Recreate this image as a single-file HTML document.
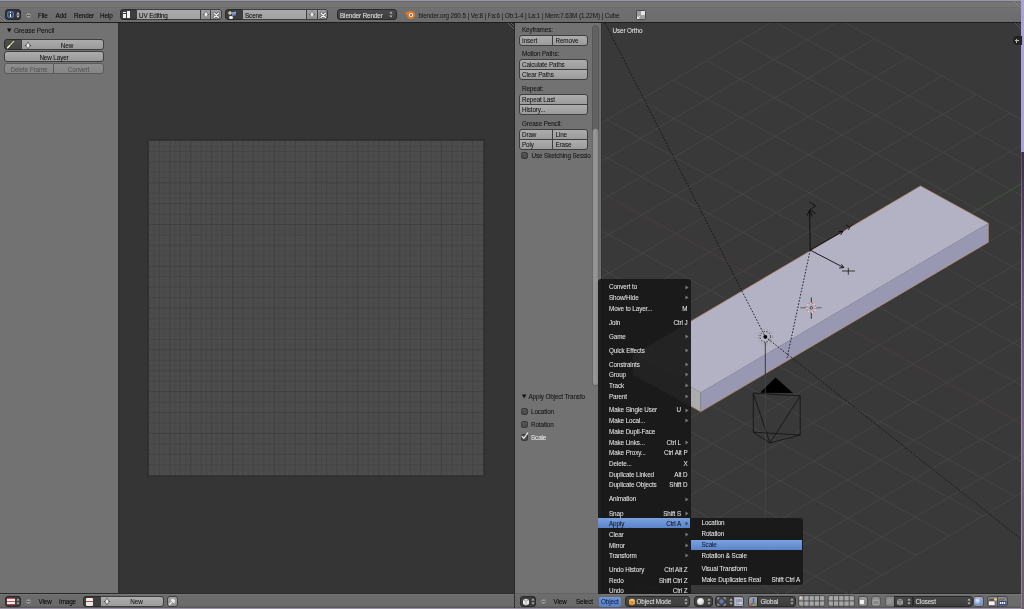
<!DOCTYPE html>
<html><head><meta charset="utf-8"><style>
*{margin:0;padding:0;box-sizing:border-box}
html,body{width:1024px;height:609px;overflow:hidden}
body{will-change:transform;position:relative;background:#727272;font-family:"Liberation Sans",sans-serif;font-size:6px;color:#000}
.a{position:absolute}
.t{position:absolute;white-space:nowrap;line-height:9.7px;height:9.7px;font-size:6.3px;letter-spacing:-0.1px;-webkit-text-stroke:0.04px currentColor}
.w{color:#e6e6e6}
.btn{position:absolute;border:1px solid #3e3e3e;border-radius:2px;background:linear-gradient(#a9a9a9,#969696)}
.dk{position:absolute;border:1px solid #2a2a2a;border-radius:2px;background:linear-gradient(#4c4c4c,#3c3c3c)}
.c{text-align:center}
</style></head><body>
<!-- top strip -->
<div class="a" style="left:0;top:0;width:1024px;height:1px;background:#9a97aa"></div>
<!-- top header -->
<div class="a" id="hdr" style="left:0;top:1px;width:1021px;height:22px;background:linear-gradient(#67676c 0,#67676c 1px,#757575 1px,#767675 6px,#6c6c6c 6px,#6c6c6c 7px,#717171 7px,#6e6e6e 14px,#6c6c6c 21px);border-bottom:1px solid #1e1e1e"></div>
<!-- info editor button -->
<div class="dk" style="left:5px;top:9px;width:16px;height:11px;border-radius:3px;background:#30333a;border-color:#26282c"></div>
<div class="a" style="left:7px;top:11.3px;width:7px;height:7px;border-radius:50%;background:radial-gradient(circle at 50% 50%,#26406a 0,#3a5a88 55%,#a8b8d0 80%,#6a7a90 100%)"></div>
<div class="a" style="left:10px;top:12.3px;width:1px;height:1px;background:#fff"></div>
<div class="a" style="left:10px;top:14px;width:1px;height:3.3px;background:#fff"></div>
<svg class="a" style="left:16px;top:10.5px" width="4" height="8"><path d="M0.3 3.4L2 1L3.7 3.4ZM0.3 4.6L2 7L3.7 4.6Z" fill="#c4c4c4"/></svg>
<div class="a" style="left:25.5px;top:12.5px;width:5px;height:5px;border-radius:50%;border:0.5px solid #8a8a8a;background:#a8a8a8"></div>
<div class="a" style="left:26.5px;top:14.5px;width:3px;height:1px;background:#555"></div>
<div class="t" style="left:38px;top:11px">File</div>
<div class="t" style="left:55.5px;top:11px">Add</div>
<div class="t" style="left:74px;top:11px">Render</div>
<div class="t" style="left:100px;top:11px">Help</div>

<!-- screen layout -->
<div class="dk" style="left:120px;top:9px;width:17px;height:11px;border-radius:3px 0 0 3px;background:#3d3d3d"></div>
<div class="a" style="left:123px;top:12px;width:3px;height:6px;background:#f0f0f0"></div>
<div class="a" style="left:127px;top:11px;width:3px;height:7px;background:#f0f0f0"></div>
<div class="a" style="left:123px;top:13px;width:3px;height:1px;background:#3d3d3d"></div>
<div class="btn" style="left:136px;top:9px;width:65px;height:11px;border-radius:0;background:linear-gradient(#aaaaaa,#a2a2a2)"></div>
<div class="t" style="left:139px;top:11px">UV Editing</div>
<div class="btn" style="left:200px;top:9px;width:11px;height:11px;border-radius:0;background:linear-gradient(#a4a4a4,#8e8e8e)"></div>
<svg class="a" style="left:201.5px;top:10px" width="8" height="9"><path d="M4 0.8L5.8 4.5L4 8.2L2.2 4.5Z" fill="#f2f2f2" stroke="#5a5a5a" stroke-width="0.6"/><path d="M0.8 4.5H2M6 4.5H7.2" stroke="#5a5a5a" stroke-width="0.9"/></svg>
<div class="btn" style="left:210px;top:9px;width:12px;height:11px;border-radius:0 3px 3px 0;background:linear-gradient(#a4a4a4,#8e8e8e)"></div>
<svg class="a" style="left:212px;top:10.5px" width="9" height="9"><path d="M2 2L6.5 6.5M6.5 2L2 6.5" stroke="#4a4a4a" stroke-width="2.6" stroke-linecap="round"/><path d="M2 2L6.5 6.5M6.5 2L2 6.5" stroke="#f4f4f4" stroke-width="1.4" stroke-linecap="round"/></svg>

<!-- scene -->
<div class="dk" style="left:225px;top:9px;width:18px;height:11px;border-radius:3px 0 0 3px;background:#3d3d3d"></div>
<div class="a" style="left:228px;top:11px;width:3.5px;height:3.5px;background:radial-gradient(#f0f0c0,#a0a070 60%,transparent 70%);border-radius:50%"></div>
<div class="a" style="left:232px;top:12px;width:3.5px;height:4px;background:linear-gradient(#a8b8e8,#4a60a8);transform:skewY(-15deg)"></div>
<div class="a" style="left:229px;top:15.5px;width:3.5px;height:3.5px;background:#f0f0f0;border-radius:50%"></div>
<div class="btn" style="left:242px;top:9px;width:65px;height:11px;border-radius:0;background:linear-gradient(#aaaaaa,#a2a2a2)"></div>
<div class="t" style="left:245px;top:11px">Scene</div>
<div class="btn" style="left:306px;top:9px;width:12px;height:11px;border-radius:0;background:linear-gradient(#a4a4a4,#8e8e8e)"></div>
<svg class="a" style="left:307.5px;top:10px" width="8" height="9"><path d="M4 0.8L5.8 4.5L4 8.2L2.2 4.5Z" fill="#f2f2f2" stroke="#5a5a5a" stroke-width="0.6"/><path d="M0.8 4.5H2M6 4.5H7.2" stroke="#5a5a5a" stroke-width="0.9"/></svg>
<div class="btn" style="left:317px;top:9px;width:11px;height:11px;border-radius:0 3px 3px 0;background:linear-gradient(#a4a4a4,#8e8e8e)"></div>
<svg class="a" style="left:318.5px;top:10.5px" width="9" height="9"><path d="M2 2L6.5 6.5M6.5 2L2 6.5" stroke="#4a4a4a" stroke-width="2.6" stroke-linecap="round"/><path d="M2 2L6.5 6.5M6.5 2L2 6.5" stroke="#f4f4f4" stroke-width="1.4" stroke-linecap="round"/></svg>

<!-- render engine -->
<div class="dk" style="left:337px;top:9px;width:60px;height:11px;border-radius:3px;background:linear-gradient(#4a4a4a,#3e3e3e)"></div>
<div class="t w" style="left:340px;top:11px">Blender Render</div>
<svg class="a" style="left:389px;top:10px" width="4" height="9"><path d="M0.5 3.5L2 1.5L3.5 3.5ZM0.5 5.5L2 7.5L3.5 5.5Z" fill="#c8c8c8"/></svg>

<!-- blender logo -->
<div class="a" style="left:406.5px;top:11px;width:8px;height:8px;border-radius:50%;background:#e07a20"></div>
<div class="a" style="left:404.5px;top:12px;width:4px;height:2px;background:#e07a20;transform:rotate(-30deg)"></div>
<div class="a" style="left:409px;top:13px;width:4px;height:4px;border-radius:50%;background:#f4f4f4"></div>
<div class="a" style="left:410px;top:14px;width:2px;height:2px;border-radius:50%;background:#3a5a90"></div>
<div class="t" style="left:418.5px;top:11px;color:#1a1a1a">blender.org 260.5 | Ve:8 | Fa:6 | Ob:1-4 | La:1 | Mem:7.63M (1.22M) | Cube</div>

<!-- maximize icon -->
<div class="a" style="left:636px;top:10px;width:10px;height:10px;border-radius:2px;background:#b8b8b8;border:0.7px solid #4a4a4a"></div>
<div class="a" style="left:641px;top:11px;width:4px;height:4px;background:#e4e4e4"></div>
<div class="a" style="left:641px;top:15px;width:4px;height:4px;background:#a0a0a0"></div>
<div class="a" style="left:637px;top:11px;width:4px;height:8px;background:#9c9c9c"></div>
<svg class="a" style="left:637px;top:14px" width="4" height="5"><path d="M0.5 4.5L3 2M0.5 2.5V4.5H2.5" stroke="#fff" stroke-width="0.8" fill="none"/></svg>
<!-- action zone hatches -->
<svg class="a" style="left:0;top:15px" width="6" height="7"><path d="M0 1L6 7M0 4L3 7" stroke="#9a9a9a" stroke-width="0.6"/><path d="M0 2.5L4.5 7M0 5.5L1.5 7" stroke="#4a4a4a" stroke-width="0.6"/></svg>
<svg class="a" style="left:1013px;top:1px" width="8" height="8"><path d="M1 0L8 7M4 0L8 4M7 0L8 1" stroke="#9a9a9a" stroke-width="0.6"/><path d="M2.5 0L8 5.5M5.5 0L8 2.5" stroke="#4a4a4a" stroke-width="0.6"/></svg>

<!-- right strip -->
<div class="a" style="left:1021px;top:0;width:3px;height:152px;background:#ada3d6"></div>
<div class="a" style="left:1021px;top:152px;width:1px;height:457px;background:linear-gradient(#5a4e68,#9a8ea8 120px,#9a8e9c 400px,#8a7e80)"></div>
<div class="a" style="left:1022px;top:152px;width:2px;height:457px;background:linear-gradient(#3a3048,#6a5a7a 150px,#7a6888 300px,#6a5a70 400px,#7a6a6e 609px)"></div>
<!-- left tool panel -->
<div class="a" id="lp" style="left:0;top:23px;width:118px;height:570px;background:#727272"></div>
<!-- image editor -->
<div class="a" id="ie" style="left:118px;top:23px;width:396px;height:570px;background:#353535"></div>
<svg class="a" style="left:146.6px;top:138.7px" width="338.2" height="338.2" viewBox="-2 -2 338.2 338.2"><rect x="-1.2" y="-1.2" width="336.6" height="336.6" fill="none" stroke="#303030" stroke-width="1.2"/><rect x="0" y="0" width="334.2" height="334.2" fill="#4c4c4c"/><path d="M5.22 0V334.2M0 5.22H334.2M15.67 0V334.2M0 15.67H334.2M26.11 0V334.2M0 26.11H334.2M36.55 0V334.2M0 36.55H334.2M47.00 0V334.2M0 47.00H334.2M57.44 0V334.2M0 57.44H334.2M67.88 0V334.2M0 67.88H334.2M78.33 0V334.2M0 78.33H334.2M88.77 0V334.2M0 88.77H334.2M99.22 0V334.2M0 99.22H334.2M109.66 0V334.2M0 109.66H334.2M120.10 0V334.2M0 120.10H334.2M130.55 0V334.2M0 130.55H334.2M140.99 0V334.2M0 140.99H334.2M151.43 0V334.2M0 151.43H334.2M161.88 0V334.2M0 161.88H334.2M172.32 0V334.2M0 172.32H334.2M182.77 0V334.2M0 182.77H334.2M193.21 0V334.2M0 193.21H334.2M203.65 0V334.2M0 203.65H334.2M214.10 0V334.2M0 214.10H334.2M224.54 0V334.2M0 224.54H334.2M234.98 0V334.2M0 234.98H334.2M245.43 0V334.2M0 245.43H334.2M255.87 0V334.2M0 255.87H334.2M266.32 0V334.2M0 266.32H334.2M276.76 0V334.2M0 276.76H334.2M287.20 0V334.2M0 287.20H334.2M297.65 0V334.2M0 297.65H334.2M308.09 0V334.2M0 308.09H334.2M318.53 0V334.2M0 318.53H334.2M328.98 0V334.2M0 328.98H334.2" stroke="#474747" stroke-width="0.5" fill="none"/><line x1="10.44" y1="0" x2="10.44" y2="334.2" stroke="#424242" stroke-width="0.8"/><line x1="0" y1="10.44" x2="334.2" y2="10.44" stroke="#424242" stroke-width="0.8"/><line x1="20.89" y1="0" x2="20.89" y2="334.2" stroke="#404040" stroke-width="0.8"/><line x1="0" y1="20.89" x2="334.2" y2="20.89" stroke="#404040" stroke-width="0.8"/><line x1="31.33" y1="0" x2="31.33" y2="334.2" stroke="#424242" stroke-width="0.8"/><line x1="0" y1="31.33" x2="334.2" y2="31.33" stroke="#424242" stroke-width="0.8"/><line x1="41.77" y1="0" x2="41.77" y2="334.2" stroke="#3e3e3e" stroke-width="0.85"/><line x1="0" y1="41.77" x2="334.2" y2="41.77" stroke="#3e3e3e" stroke-width="0.85"/><line x1="52.22" y1="0" x2="52.22" y2="334.2" stroke="#424242" stroke-width="0.8"/><line x1="0" y1="52.22" x2="334.2" y2="52.22" stroke="#424242" stroke-width="0.8"/><line x1="62.66" y1="0" x2="62.66" y2="334.2" stroke="#404040" stroke-width="0.8"/><line x1="0" y1="62.66" x2="334.2" y2="62.66" stroke="#404040" stroke-width="0.8"/><line x1="73.11" y1="0" x2="73.11" y2="334.2" stroke="#424242" stroke-width="0.8"/><line x1="0" y1="73.11" x2="334.2" y2="73.11" stroke="#424242" stroke-width="0.8"/><line x1="83.55" y1="0" x2="83.55" y2="334.2" stroke="#3e3e3e" stroke-width="0.85"/><line x1="0" y1="83.55" x2="334.2" y2="83.55" stroke="#3e3e3e" stroke-width="0.85"/><line x1="93.99" y1="0" x2="93.99" y2="334.2" stroke="#424242" stroke-width="0.8"/><line x1="0" y1="93.99" x2="334.2" y2="93.99" stroke="#424242" stroke-width="0.8"/><line x1="104.44" y1="0" x2="104.44" y2="334.2" stroke="#404040" stroke-width="0.8"/><line x1="0" y1="104.44" x2="334.2" y2="104.44" stroke="#404040" stroke-width="0.8"/><line x1="114.88" y1="0" x2="114.88" y2="334.2" stroke="#424242" stroke-width="0.8"/><line x1="0" y1="114.88" x2="334.2" y2="114.88" stroke="#424242" stroke-width="0.8"/><line x1="125.32" y1="0" x2="125.32" y2="334.2" stroke="#3e3e3e" stroke-width="0.85"/><line x1="0" y1="125.32" x2="334.2" y2="125.32" stroke="#3e3e3e" stroke-width="0.85"/><line x1="135.77" y1="0" x2="135.77" y2="334.2" stroke="#424242" stroke-width="0.8"/><line x1="0" y1="135.77" x2="334.2" y2="135.77" stroke="#424242" stroke-width="0.8"/><line x1="146.21" y1="0" x2="146.21" y2="334.2" stroke="#404040" stroke-width="0.8"/><line x1="0" y1="146.21" x2="334.2" y2="146.21" stroke="#404040" stroke-width="0.8"/><line x1="156.66" y1="0" x2="156.66" y2="334.2" stroke="#424242" stroke-width="0.8"/><line x1="0" y1="156.66" x2="334.2" y2="156.66" stroke="#424242" stroke-width="0.8"/><line x1="167.10" y1="0" x2="167.10" y2="334.2" stroke="#3e3e3e" stroke-width="0.85"/><line x1="0" y1="167.10" x2="334.2" y2="167.10" stroke="#3e3e3e" stroke-width="0.85"/><line x1="177.54" y1="0" x2="177.54" y2="334.2" stroke="#424242" stroke-width="0.8"/><line x1="0" y1="177.54" x2="334.2" y2="177.54" stroke="#424242" stroke-width="0.8"/><line x1="187.99" y1="0" x2="187.99" y2="334.2" stroke="#404040" stroke-width="0.8"/><line x1="0" y1="187.99" x2="334.2" y2="187.99" stroke="#404040" stroke-width="0.8"/><line x1="198.43" y1="0" x2="198.43" y2="334.2" stroke="#424242" stroke-width="0.8"/><line x1="0" y1="198.43" x2="334.2" y2="198.43" stroke="#424242" stroke-width="0.8"/><line x1="208.88" y1="0" x2="208.88" y2="334.2" stroke="#3e3e3e" stroke-width="0.85"/><line x1="0" y1="208.88" x2="334.2" y2="208.88" stroke="#3e3e3e" stroke-width="0.85"/><line x1="219.32" y1="0" x2="219.32" y2="334.2" stroke="#424242" stroke-width="0.8"/><line x1="0" y1="219.32" x2="334.2" y2="219.32" stroke="#424242" stroke-width="0.8"/><line x1="229.76" y1="0" x2="229.76" y2="334.2" stroke="#404040" stroke-width="0.8"/><line x1="0" y1="229.76" x2="334.2" y2="229.76" stroke="#404040" stroke-width="0.8"/><line x1="240.21" y1="0" x2="240.21" y2="334.2" stroke="#424242" stroke-width="0.8"/><line x1="0" y1="240.21" x2="334.2" y2="240.21" stroke="#424242" stroke-width="0.8"/><line x1="250.65" y1="0" x2="250.65" y2="334.2" stroke="#3e3e3e" stroke-width="0.85"/><line x1="0" y1="250.65" x2="334.2" y2="250.65" stroke="#3e3e3e" stroke-width="0.85"/><line x1="261.09" y1="0" x2="261.09" y2="334.2" stroke="#424242" stroke-width="0.8"/><line x1="0" y1="261.09" x2="334.2" y2="261.09" stroke="#424242" stroke-width="0.8"/><line x1="271.54" y1="0" x2="271.54" y2="334.2" stroke="#404040" stroke-width="0.8"/><line x1="0" y1="271.54" x2="334.2" y2="271.54" stroke="#404040" stroke-width="0.8"/><line x1="281.98" y1="0" x2="281.98" y2="334.2" stroke="#424242" stroke-width="0.8"/><line x1="0" y1="281.98" x2="334.2" y2="281.98" stroke="#424242" stroke-width="0.8"/><line x1="292.43" y1="0" x2="292.43" y2="334.2" stroke="#3e3e3e" stroke-width="0.85"/><line x1="0" y1="292.43" x2="334.2" y2="292.43" stroke="#3e3e3e" stroke-width="0.85"/><line x1="302.87" y1="0" x2="302.87" y2="334.2" stroke="#424242" stroke-width="0.8"/><line x1="0" y1="302.87" x2="334.2" y2="302.87" stroke="#424242" stroke-width="0.8"/><line x1="313.31" y1="0" x2="313.31" y2="334.2" stroke="#404040" stroke-width="0.8"/><line x1="0" y1="313.31" x2="334.2" y2="313.31" stroke="#404040" stroke-width="0.8"/><line x1="323.76" y1="0" x2="323.76" y2="334.2" stroke="#424242" stroke-width="0.8"/><line x1="0" y1="323.76" x2="334.2" y2="323.76" stroke="#424242" stroke-width="0.8"/></svg>
<!-- separator -->
<div class="a" style="left:514px;top:23px;width:1px;height:571px;background:#262626"></div>
<!-- 3d tool region -->
<div class="a" id="tr" style="left:515px;top:23px;width:86px;height:570px;background:#727272"></div>
<!-- 3d view -->
<div class="a" id="v3d" style="left:601px;top:23px;width:420px;height:570px;background:#393939;overflow:hidden"></div>

<!-- bottom headers -->
<div class="a" id="bh" style="left:0;top:593px;width:1021px;height:15px;background:linear-gradient(#2a2a2a 0,#2a2a2a 1px,#7a7a7a 1px,#6c6c6c 2.5px,#6a6a6a 13px,#5a5a5a 14px)"></div>
<div class="a" style="left:514px;top:593px;width:1px;height:15px;background:#2e2e2e"></div>
<div class="a" style="left:0;top:607.8px;width:1021px;height:1.2px;background:#9a90a8"></div>
<div class="a" style="left:515px;top:593px;width:86px;height:2px;background:linear-gradient(#5e5e5e,#727272)"></div>

<svg class="a" style="left:601px;top:23px" width="420" height="571" viewBox="601 23 420 571">
<path d="M273.8 316.6L816.0 614.5M307.1 296.9L849.3 594.8M340.4 277.2L882.6 575.1M373.7 257.5L915.9 555.4M407.0 237.8L949.2 535.7M440.3 218.1L982.5 516.0M473.6 198.4L1015.8 496.4M506.9 178.7L1049.1 476.7M573.5 139.4L1115.7 437.3M606.8 119.7L1149.0 417.6M640.1 100.0L1182.3 397.9M673.4 80.3L1215.6 378.2M706.7 60.6L1248.9 358.5M740.0 40.9L1282.2 338.8M773.3 21.2L1315.5 319.1M806.6 1.5L1348.8 299.4M273.8 316.6L806.6 1.5M307.7 335.2L840.5 20.1M341.6 353.8L874.4 38.8M375.5 372.4L908.3 57.4M409.4 391.1L942.1 76.0M443.2 409.7L976.0 94.6M477.1 428.3L1009.9 113.2M511.0 446.9L1043.8 131.9M578.8 484.2L1111.6 169.1M612.7 502.8L1145.5 187.7M646.6 521.4L1179.4 206.4M680.5 540.0L1213.3 225.0M714.4 558.6L1247.2 243.6M748.2 577.2L1281.0 262.2M782.1 595.9L1314.9 280.8M816.0 614.5L1348.8 299.4" stroke="#464646" stroke-width="0.9" fill="none"/>
<path d="M540.2 159.1L1082.4 457.0" stroke="#4f3c3c" stroke-width="1" fill="none"/>
<path d="M544.9 465.5L1077.7 150.5" stroke="#3c5a3c" stroke-width="1" fill="none"/>
<polygon points="700.7,392.6 632.9,355.4 632.9,374.4 700.7,411.6" fill="#acacae"/>
<polygon points="988.3,223.2 700.7,392.6 700.7,411.6 988.3,242.2" fill="#9898b2"/>
<polygon points="920.5,186.0 988.3,223.2 700.7,392.6 632.9,355.4" fill="#b2b2c4"/>
<polyline points="632.9,355.4 920.5,186.0 988.3,223.2 988.3,242.2 700.7,411.6 632.9,374.4" fill="none" stroke="#c89068" stroke-width="0.7"/>
<line x1="700.7" y1="392.6" x2="700.7" y2="411.6" stroke="#8a8a96" stroke-width="0.6"/>
<!-- dotted relationship lines -->
<path d="M605 23L765.3 336.8M765.3 336.8L1021 539M810.2 250.1L786.8 359" stroke="#111" stroke-width="0.9" stroke-dasharray="1.6 1.6" fill="none"/>
<!-- camera -->
<polygon points="775.6,377.5 760.2,392.6 792.9,393.1" fill="#000"/>
<path d="M753.3 393.1L800.2 395.9L800.2 435L753.3 432.2ZM753.3 393.1L769.9 443M800.2 395.9L769.9 443M800.2 435L769.9 443M753.3 432.2L769.9 443" stroke="#111" stroke-width="0.8" fill="none"/>
<!-- lamp -->
<line x1="765.3" y1="342" x2="765.3" y2="375" stroke="#222" stroke-width="0.8"/>
<line x1="765.3" y1="374" x2="765.3" y2="520" stroke="#4a4a4a" stroke-width="0.7"/>
<circle cx="765.3" cy="336.8" r="5.3" fill="none" stroke="#111" stroke-width="0.9" stroke-dasharray="1.5 1.3"/>
<circle cx="765.3" cy="336.8" r="5.3" fill="none" stroke="#d8d8d8" stroke-width="0.6" stroke-dasharray="1.3 1.5" stroke-dashoffset="1.5"/>
<circle cx="765.3" cy="336.8" r="7.4" fill="none" stroke="#7a7a88" stroke-width="0.6" stroke-dasharray="1.2 1.8"/>
<circle cx="765.3" cy="336.8" r="1.9" fill="#000"/>
<!-- 3d cursor -->
<path d="M811.3 297.5V303.5M811.3 312V318.7" stroke="#222" stroke-width="0.9"/>
<path d="M800.3 307.8H806.5M816 307.8H821.6" stroke="#555560" stroke-width="0.9"/>
<circle cx="811.3" cy="307.8" r="4.6" fill="none" stroke="#e04848" stroke-width="0.9" stroke-dasharray="1.8 1.8"/>
<circle cx="811.3" cy="307.8" r="4.6" fill="none" stroke="#f4f4f4" stroke-width="0.9" stroke-dasharray="1.8 1.8" stroke-dashoffset="1.8"/>
<circle cx="811.3" cy="307.8" r="1.3" fill="none" stroke="#222" stroke-width="0.7"/>
<!-- manipulator -->
<path d="M810.2 250.1L809.6 210.5M807 215.5L809.7 210.2L812.3 216.5" stroke="#0a0a0a" stroke-width="0.9" fill="none"/>
<path d="M809.4 201.9L815.6 205.9L809.8 209.8L815.7 213.6" stroke="#0a0a0a" stroke-width="0.8" fill="none"/>
<path d="M810.2 250.1L843 231.3M838.5 231.6L843 231.3L840.6 235" stroke="#0a0a0a" stroke-width="0.9" fill="none"/>
<path d="M846 225L849.5 227.2L852.5 224.5M849.5 227.2L848.6 230" stroke="#0a0a0a" stroke-width="0.8" fill="none"/>
<path d="M810.2 250.1L843.8 267.6M839.2 268L843.8 267.6L841.5 264.3" stroke="#0a0a0a" stroke-width="0.9" fill="none"/>
<path d="M842 271H855M848.3 267.8V274.8" stroke="#1a1a1a" stroke-width="0.8" fill="none"/>
</svg>
<div class="t" style="left:612.5px;top:25.5px;color:#e8e8e8">User Ortho</div>
<div class="t" style="left:636px;top:582.5px;color:#8a8a8a">(1) Cube</div>
<!-- hatch + small plus button -->
<svg class="a" style="left:1014px;top:23px" width="7" height="7"><path d="M1 0L7 6M4 0L7 3" stroke="#6a6a6a" stroke-width="0.6"/><path d="M2.5 0L7 4.5M5.5 0L7 1.5" stroke="#222" stroke-width="0.6"/></svg>
<div class="a" style="left:1012.5px;top:35.5px;width:9px;height:9px;border-radius:4px 0 0 4px;background:#242424"></div>
<div class="a" style="left:1016px;top:38.5px;width:1px;height:4px;background:#bbb"></div>
<div class="a" style="left:1014.5px;top:40px;width:4px;height:1px;background:#bbb"></div>

<!-- ===== left grease pencil panel ===== -->
<svg class="a" style="left:7px;top:28px" width="5" height="5"><path d="M0 0.5H4.4L2.2 4.5Z" fill="#111"/></svg>
<div class="t" style="left:14px;top:26.3px;font-size:6.6px;color:#111">Grease Pencil</div>
<svg class="a" style="left:97px;top:24px;opacity:0.5" width="8" height="7"><path d="M2 0L8 6M5 0L8 3" stroke="#8a8a8a" stroke-width="0.6"/><path d="M3 0L8 5M6 0L8 2" stroke="#5a5a5a" stroke-width="0.5"/></svg>

<div class="dk" style="left:4px;top:39px;width:18px;height:11px;border-radius:3px 0 0 3px;background:linear-gradient(#4e4e4e,#464646)"></div>
<svg class="a" style="left:6px;top:40px" width="10" height="9"><path d="M1.8 7.6L7.8 1.2" stroke="#2a3420" stroke-width="2.6" stroke-linecap="round"/><path d="M1.8 7.6L7.8 1.2" stroke="#c8c8a0" stroke-width="1.5" stroke-linecap="round"/><path d="M1.6 7.8L3.4 5.9" stroke="#eef4dc" stroke-width="1.4" stroke-linecap="round"/></svg>
<div class="btn" style="left:21px;top:39px;width:83px;height:11px;border-radius:0 3px 3px 0;background:linear-gradient(#acacac,#9a9a9a)"></div>
<svg class="a" style="left:23.5px;top:40.5px" width="8" height="9"><path d="M4 0.8L5.8 4.5L4 8.2L2.2 4.5Z" fill="#f2f2f2" stroke="#4a4a4a" stroke-width="0.7"/><path d="M0.8 4.5H2M6 4.5H7.2" stroke="#4a4a4a" stroke-width="1"/></svg>
<div class="t c" style="left:21px;top:41px;width:92px;color:#111">New</div>

<div class="btn" style="left:4px;top:51px;width:100px;height:11px;border-radius:3px;background:linear-gradient(#acacac,#9a9a9a)"></div>
<div class="t c" style="left:4px;top:53px;width:100px;color:#111">New Layer</div>

<div class="btn" style="left:4px;top:63px;width:50px;height:11px;border-radius:3px 0 0 3px;border-color:#5c5c5c;background:linear-gradient(#8e8e8e,#858585)"></div>
<div class="btn" style="left:53px;top:63px;width:51px;height:11px;border-radius:0 3px 3px 0;border-color:#5c5c5c;background:linear-gradient(#8e8e8e,#858585)"></div>
<div class="t c" style="left:4px;top:65px;width:50px;color:#555">Delete Frame</div>
<div class="t c" style="left:53px;top:65px;width:51px;color:#555">Convert</div>

<!-- left region right edge highlight -->
<div class="a" style="left:118px;top:23px;width:2px;height:571px;background:#323232"></div>

<!-- ===== 3D tool region ===== -->
<svg class="a" style="left:507px;top:23px" width="7" height="6"><path d="M1 0L7 6M4 0L7 3" stroke="#8a8a8a" stroke-width="0.6"/><path d="M2.5 0L7 4.5M5.5 0L7 1.5" stroke="#1a1a1a" stroke-width="0.6"/></svg>
<div class="t" style="left:522px;top:25.4px;color:#111">Keyframes:</div>
<div class="btn" style="left:519px;top:35px;width:34px;height:11px;border-radius:3px 0 0 3px;background:linear-gradient(#adadad,#9b9b9b)"></div>
<div class="btn" style="left:552px;top:35px;width:36px;height:11px;border-radius:0 3px 3px 0;background:linear-gradient(#adadad,#9b9b9b)"></div>
<div class="t" style="left:522px;top:36.4px;color:#111">Insert</div>
<div class="t" style="left:555.5px;top:36.4px;color:#111">Remove</div>

<div class="t" style="left:522px;top:49.4px;color:#111">Motion Paths:</div>
<div class="btn" style="left:519px;top:59px;width:69px;height:11px;border-radius:3px 3px 0 0;background:linear-gradient(#adadad,#9b9b9b)"></div>
<div class="btn" style="left:519px;top:69px;width:69px;height:11px;border-radius:0 0 3px 3px;background:linear-gradient(#adadad,#9b9b9b)"></div>
<div class="t" style="left:522px;top:60.4px;color:#111">Calculate Paths</div>
<div class="t" style="left:522px;top:70.4px;color:#111">Clear Paths</div>

<div class="t" style="left:522px;top:84.4px;color:#111">Repeat:</div>
<div class="btn" style="left:519px;top:94px;width:69px;height:11px;border-radius:3px 3px 0 0;background:linear-gradient(#adadad,#9b9b9b)"></div>
<div class="btn" style="left:519px;top:104px;width:69px;height:11px;border-radius:0 0 3px 3px;background:linear-gradient(#adadad,#9b9b9b)"></div>
<div class="t" style="left:522px;top:95.4px;color:#111">Repeat Last</div>
<div class="t" style="left:522px;top:105.4px;color:#111">History...</div>

<div class="t" style="left:522px;top:119.4px;color:#111">Grease Pencil:</div>
<div class="btn" style="left:519px;top:129px;width:34px;height:11px;border-radius:3px 0 0 0;background:linear-gradient(#adadad,#9b9b9b)"></div>
<div class="btn" style="left:552px;top:129px;width:36px;height:11px;border-radius:0 3px 0 0;background:linear-gradient(#adadad,#9b9b9b)"></div>
<div class="btn" style="left:519px;top:139px;width:34px;height:11px;border-radius:0 0 0 3px;background:linear-gradient(#adadad,#9b9b9b)"></div>
<div class="btn" style="left:552px;top:139px;width:36px;height:11px;border-radius:0 0 3px 0;background:linear-gradient(#adadad,#9b9b9b)"></div>
<div class="t" style="left:522px;top:130.4px;color:#111">Draw</div>
<div class="t" style="left:555.5px;top:130.4px;color:#111">Line</div>
<div class="t" style="left:522px;top:140.4px;color:#111">Poly</div>
<div class="t" style="left:555.5px;top:140.4px;color:#111">Erase</div>

<div class="dk" style="left:521px;top:152px;width:7px;height:7px;border-radius:2px;background:linear-gradient(#555,#4a4a4a);border-color:#3a3a3a"></div>
<div class="t" style="left:531.5px;top:151.4px;color:#111">Use Sketching Sessio</div>

<!-- scrollbar -->
<div class="a" style="left:592px;top:25px;width:7px;height:361px;border-radius:3.5px;background:#626262;border:0.7px solid #555"></div>
<div class="a" style="left:592px;top:128px;width:7px;height:258px;border-radius:3.5px;background:linear-gradient(90deg,#8e8e8e,#999 40%,#8a8a8a);border:1px solid #6a6a6a"></div>
<div class="a" style="left:599px;top:23px;width:2px;height:570px;background:#707070"></div>
<div class="a" style="left:601px;top:23px;width:1px;height:570px;background:#323232"></div>

<!-- apply object transform panel -->
<svg class="a" style="left:522px;top:394px" width="5" height="5"><path d="M0 0.5H4.4L2.2 4.5Z" fill="#111"/></svg>
<div class="t" style="left:528.5px;top:392.4px;color:#111;font-size:6.3px">Apply Object Transfo</div>
<div class="dk" style="left:520.5px;top:408px;width:7px;height:7px;border-radius:2px;background:linear-gradient(#555,#4a4a4a);border-color:#3a3a3a"></div>
<div class="t" style="left:531px;top:407.4px;color:#111">Location</div>
<div class="dk" style="left:520.5px;top:421px;width:7px;height:7px;border-radius:2px;background:linear-gradient(#555,#4a4a4a);border-color:#3a3a3a"></div>
<div class="t" style="left:531px;top:420.4px;color:#111">Rotation</div>
<div class="dk" style="left:520.5px;top:434px;width:7px;height:7px;border-radius:2px;background:linear-gradient(#555,#4a4a4a);border-color:#3a3a3a"></div>
<svg class="a" style="left:520px;top:431px" width="9" height="9"><path d="M1.8 5.2L3.8 7.3L8 1.5" stroke="#f2f2f2" stroke-width="1.2" fill="none"/></svg>
<div class="t" style="left:531px;top:433.4px;color:#f0f0f0">Scale</div>

<!-- ===== image editor header ===== -->
<div class="dk" style="left:5px;top:596px;width:16px;height:11px;border-radius:3px;background:#3d3d3d"></div>
<div class="a" style="left:7px;top:598px;width:8px;height:7px;background:linear-gradient(#d04848 0,#d04848 1px,#f0f0f0 1px,#f0f0f0 3px,#c05858 3px,#c05858 4px,#e8e8e8 4px,#e8e8e8 6px,#b04848 6px)"></div>
<svg class="a" style="left:16px;top:597px" width="4" height="9"><path d="M0.5 3.5L2 1.5L3.5 3.5ZM0.5 5.5L2 7.5L3.5 5.5Z" fill="#bdbdbd"/></svg>
<div class="a" style="left:25.5px;top:599px;width:5px;height:5px;border-radius:50%;border:0.5px solid #8a8a8a;background:#a8a8a8"></div>
<div class="a" style="left:26.5px;top:601px;width:3px;height:1px;background:#555"></div>
<div class="t" style="left:38.5px;top:596.5px">View</div>
<div class="t" style="left:59px;top:596.5px">Image</div>
<div class="dk" style="left:82.5px;top:596px;width:18px;height:11px;border-radius:3px 0 0 3px;background:#3d3d3d"></div>
<div class="a" style="left:86px;top:597.5px;width:7px;height:8px;border-radius:1px;background:linear-gradient(#f0f0f0 0,#f0f0f0 3px,#c04848 3px,#c04848 4px,#e8e8e8 4px)"></div>
<div class="btn" style="left:99.5px;top:596px;width:64px;height:11px;border-radius:0 3px 3px 0;background:linear-gradient(#adadad,#9b9b9b)"></div>
<svg class="a" style="left:102.5px;top:597px" width="8" height="9"><path d="M4 0.8L5.8 4.5L4 8.2L2.2 4.5Z" fill="#f2f2f2" stroke="#4a4a4a" stroke-width="0.7"/><path d="M0.8 4.5H2M6 4.5H7.2" stroke="#4a4a4a" stroke-width="1"/></svg>
<div class="t c" style="left:110px;top:596.5px;width:53px;color:#111">New</div>
<div class="btn" style="left:166.5px;top:596px;width:11px;height:11px;border-radius:3px;background:linear-gradient(#a4a4a4,#909090)"></div>
<svg class="a" style="left:168px;top:597.5px" width="8" height="8"><path d="M1 7L4 4M3 1.5L6.5 5M4.5 1L7 3.5" stroke="#f2f2f2" stroke-width="1.1"/></svg>

<!-- ===== 3D view header ===== -->
<svg class="a" style="left:515px;top:600px" width="8" height="7"><path d="M0 0L7 7M0 3L4 7" stroke="#5a5a5a" stroke-width="0.7"/><path d="M0 1L6 7M0 4L3 7" stroke="#8a8a8a" stroke-width="0.5"/></svg>
<div class="dk" style="left:520px;top:596px;width:16px;height:11px;border-radius:3px;background:#3d3d3d"></div>
<svg class="a" style="left:522px;top:597.5px" width="8" height="8"><path d="M1 2L4 0.8L7 2V6L4 7.5L1 6Z" fill="#e8e8e8"/><path d="M4 3V7.5M1 2L4 3L7 2" stroke="#888" stroke-width="0.6" fill="none"/></svg>
<svg class="a" style="left:531px;top:597px" width="4" height="9"><path d="M0.5 3.5L2 1.5L3.5 3.5ZM0.5 5.5L2 7.5L3.5 5.5Z" fill="#bdbdbd"/></svg>
<div class="a" style="left:540.5px;top:599px;width:5px;height:5px;border-radius:50%;border:0.5px solid #8a8a8a;background:#a8a8a8"></div>
<div class="a" style="left:541.5px;top:601px;width:3px;height:1px;background:#555"></div>
<div class="t" style="left:553.5px;top:596.5px">View</div>
<div class="t" style="left:576px;top:596.5px">Select</div>
<div class="a" style="left:598.5px;top:596.5px;width:22.5px;height:10.5px;border-radius:2px;background:linear-gradient(#6e96d6,#5580c4)"></div>
<div class="t" style="left:601px;top:596.5px;color:#0c1c40">Object</div>

<div class="dk" style="left:624.5px;top:596px;width:65.5px;height:11px;border-radius:3px;background:linear-gradient(#474747,#3d3d3d)"></div>
<svg class="a" style="left:627.5px;top:597.5px" width="8" height="8"><path d="M1 2L4 0.8L7 2V6L4 7.5L1 6Z" fill="#e8a040"/><path d="M1 2L4 3L7 2L4 0.8Z" fill="#f8d080"/><path d="M4 3V7.5" stroke="#b06820" stroke-width="0.6"/></svg>
<div class="t w" style="left:636.5px;top:596.5px">Object Mode</div>
<svg class="a" style="left:684px;top:597px" width="4" height="9"><path d="M0.5 3.5L2 1.5L3.5 3.5ZM0.5 5.5L2 7.5L3.5 5.5Z" fill="#c8c8c8"/></svg>

<div class="dk" style="left:694px;top:596px;width:19px;height:11px;border-radius:3px;background:linear-gradient(#474747,#3d3d3d)"></div>
<div class="a" style="left:697px;top:598px;width:7px;height:7px;border-radius:50%;background:radial-gradient(circle at 40% 35%,#fff,#ddd 50%,#999)"></div>
<svg class="a" style="left:707px;top:597px" width="4" height="9"><path d="M0.5 3.5L2 1.5L3.5 3.5ZM0.5 5.5L2 7.5L3.5 5.5Z" fill="#c8c8c8"/></svg>

<div class="dk" style="left:715px;top:596px;width:19px;height:11px;border-radius:3px 0 0 3px;background:linear-gradient(#474747,#3d3d3d)"></div>
<svg class="a" style="left:717px;top:597px" width="9" height="9"><path d="M0.8 2.5V0.8H2.5M6.5 0.8H8.2V2.5M8.2 6.5V8.2H6.5M2.5 8.2H0.8V6.5" stroke="#d0d0d0" stroke-width="0.8" fill="none"/><circle cx="4.5" cy="4.5" r="2.2" fill="#5a7ab8"/></svg>
<svg class="a" style="left:728.5px;top:597px" width="4" height="9"><path d="M0.5 3.5L2 1.5L3.5 3.5ZM0.5 5.5L2 7.5L3.5 5.5Z" fill="#c8c8c8"/></svg>
<div class="btn" style="left:733px;top:596px;width:11px;height:11px;border-radius:0 3px 3px 0;background:linear-gradient(#9ea2b8,#8a8ea8)"></div>
<svg class="a" style="left:734.5px;top:597.5px" width="8" height="8"><rect x="0.5" y="0.5" width="7" height="7" fill="none" stroke="#eee" stroke-width="0.7" stroke-dasharray="1.2 0.8"/><path d="M1.5 5H6.5M5 3.8L6.5 5L5 6.2" stroke="#fff" stroke-width="0.7" fill="none"/></svg>

<div class="btn" style="left:747.5px;top:596px;width:10.5px;height:11px;border-radius:3px 0 0 3px;background:linear-gradient(#a0a0a0,#909090)"></div>
<svg class="a" style="left:748.5px;top:597px" width="9" height="9"><path d="M4.5 1V6" stroke="#3a60d0" stroke-width="1.3"/><path d="M4.5 6L1.5 8" stroke="#d03030" stroke-width="1.3"/><path d="M4.5 6L7.8 7.8" stroke="#30b030" stroke-width="1.3"/></svg>
<div class="dk" style="left:757px;top:596px;width:39px;height:11px;border-radius:0 3px 3px 0;background:linear-gradient(#474747,#3d3d3d)"></div>
<div class="t w" style="left:760.5px;top:596.5px">Global</div>
<svg class="a" style="left:790px;top:597px" width="4" height="9"><path d="M0.5 3.5L2 1.5L3.5 3.5ZM0.5 5.5L2 7.5L3.5 5.5Z" fill="#c8c8c8"/></svg>

<!-- layers -->
<svg class="a" style="left:798px;top:595px" width="58" height="12">
<g stroke="#3c3c3c" stroke-width="0.8">
<rect x="0.6" y="0.6" width="26.2" height="10.6" rx="2" fill="#a6a6a6"/>
<rect x="30.2" y="0.6" width="26.2" height="10.6" rx="2" fill="#a6a6a6"/>
<path d="M0.6 5.9H26.8M5.8 0.6V11.2M11.1 0.6V11.2M16.3 0.6V11.2M21.6 0.6V11.2M30.2 5.9H56.4M35.4 0.6V11.2M40.7 0.6V11.2M45.9 0.6V11.2M51.2 0.6V11.2" fill="none"/>
</g>
<rect x="1.6" y="1.6" width="2" height="2.6" fill="#e8d8a0"/>
</svg>

<div class="btn" style="left:857.5px;top:596px;width:10.5px;height:11px;border-radius:3px;border-color:#4a4a4a;background:linear-gradient(#9c9c9c,#8a8a8a)"></div>
<svg class="a" style="left:859px;top:598px" width="8" height="7"><path d="M0.5 1.5H5.5V6.5H0.5Z" fill="#f0f0f0" stroke="#666" stroke-width="0.5"/><path d="M5.5 3L7.5 2V6L5.5 5" fill="#888"/></svg>
<div class="btn" style="left:870.5px;top:596px;width:10.5px;height:11px;border-radius:3px;border-color:#5a5a5a;background:linear-gradient(#8c8c8c,#828282)"></div>
<svg class="a" style="left:872px;top:597.5px" width="8" height="8"><path d="M1 2.5H7V6.5H1Z" fill="none" stroke="#a8a8a8" stroke-width="0.8"/><path d="M2.5 2.5V1H5.5V2.5" fill="none" stroke="#a8a8a8" stroke-width="0.7"/></svg>
<div class="btn" style="left:884.5px;top:596px;width:10px;height:11px;border-radius:3px 0 0 3px;border-color:#5a5a5a;background:linear-gradient(#8c8c8c,#828282)"></div>
<svg class="a" style="left:886px;top:597.5px" width="7" height="8"><path d="M1 6L6 1M1 3.5L3.5 1M3.5 6L6 3.5" stroke="#b0b0b0" stroke-width="0.8"/></svg>
<div class="dk" style="left:894px;top:596px;width:19px;height:11px;border-radius:0;background:linear-gradient(#474747,#3d3d3d)"></div>
<svg class="a" style="left:896px;top:597.5px" width="8" height="8"><path d="M1 2L4 0.8L7 2V6L4 7.5L1 6Z" fill="#9a9a9a"/><path d="M4 3V7.5M1 2L4 3L7 2" stroke="#555" stroke-width="0.6" fill="none"/></svg>
<svg class="a" style="left:907px;top:597px" width="4" height="9"><path d="M0.5 3.5L2 1.5L3.5 3.5ZM0.5 5.5L2 7.5L3.5 5.5Z" fill="#c8c8c8"/></svg>
<div class="dk" style="left:912.5px;top:596px;width:60.5px;height:11px;border-radius:0 3px 3px 0;background:linear-gradient(#474747,#3d3d3d)"></div>
<div class="t w" style="left:915.5px;top:596.5px">Closest</div>
<svg class="a" style="left:966.5px;top:597px" width="4" height="9"><path d="M0.5 3.5L2 1.5L3.5 3.5ZM0.5 5.5L2 7.5L3.5 5.5Z" fill="#c8c8c8"/></svg>
<div class="btn" style="left:973px;top:596px;width:10.5px;height:11px;border-radius:3px;border-color:#4a4a4a;background:linear-gradient(#a8b0c8,#8c94b0)"></div>
<div class="a" style="left:975px;top:598px;width:7px;height:7px;border-radius:50%;background:radial-gradient(circle at 35% 35%,#e8f0ff,#6a8ad0 70%)"></div>
<div class="btn" style="left:986.5px;top:596px;width:11px;height:11px;border-radius:3px 0 0 3px;border-color:#4a4a4a;background:linear-gradient(#8a8a8a,#7a7a7a)"></div>
<svg class="a" style="left:988px;top:597.5px" width="9" height="8"><path d="M0.5 3H7V7.5H0.5Z" fill="#f2f2f2" stroke="#333" stroke-width="0.5"/><path d="M0.5 3L1.5 0.8H6L7 3" fill="#555"/><circle cx="7.5" cy="1.5" r="1.3" fill="#f0e060"/></svg>
<div class="btn" style="left:997px;top:596px;width:11px;height:11px;border-radius:0 3px 3px 0;border-color:#4a4a4a;background:linear-gradient(#8a8a8a,#7a7a7a)"></div>
<svg class="a" style="left:998px;top:597.5px" width="9" height="8"><path d="M0.5 3H8.5V7.5H0.5Z" fill="#3a4a80"/><circle cx="2.5" cy="5" r="0.9" fill="#fff"/><circle cx="4.5" cy="5" r="0.9" fill="#fff"/><circle cx="6.5" cy="5" r="0.9" fill="#fff"/><path d="M1 2.5L3 0.5M4 2.5L6 0.5" stroke="#222" stroke-width="0.6"/></svg>

<div class="a" style="left:598px;top:279px;width:92.5px;height:315px;border-radius:3px 3px 0 0;background:rgba(24,24,24,0.93)"></div>
<div class="a" style="left:598px;top:518px;width:92px;height:10px;background:linear-gradient(#7aa2e0,#5a84c8)"></div>
<div class="t" style="left:609px;top:282.2px;color:#e8e8e8">Convert to</div>
<svg class="a" style="left:684.5px;top:284.5px" width="4" height="5"><path d="M0.5 0.5L3.5 2.5L0.5 4.5Z" fill="#7a7a7a"/></svg>
<div class="t" style="left:609px;top:292.8px;color:#e8e8e8">Show/Hide</div>
<svg class="a" style="left:684.5px;top:295.1px" width="4" height="5"><path d="M0.5 0.5L3.5 2.5L0.5 4.5Z" fill="#7a7a7a"/></svg>
<div class="t" style="left:609px;top:303.7px;color:#e8e8e8">Move to Layer...</div>
<div class="t" style="right:336.5px;top:303.7px;color:#e8e8e8">M</div>
<div class="t" style="left:609px;top:317.5px;color:#e8e8e8">Join</div>
<div class="t" style="right:336.5px;top:317.5px;color:#e8e8e8">Ctrl J</div>
<div class="t" style="left:609px;top:331.8px;color:#e8e8e8">Game</div>
<svg class="a" style="left:684.5px;top:334.1px" width="4" height="5"><path d="M0.5 0.5L3.5 2.5L0.5 4.5Z" fill="#7a7a7a"/></svg>
<div class="t" style="left:609px;top:345.5px;color:#e8e8e8">Quick Effects</div>
<svg class="a" style="left:684.5px;top:347.8px" width="4" height="5"><path d="M0.5 0.5L3.5 2.5L0.5 4.5Z" fill="#7a7a7a"/></svg>
<div class="t" style="left:609px;top:359.5px;color:#e8e8e8">Constraints</div>
<svg class="a" style="left:684.5px;top:361.8px" width="4" height="5"><path d="M0.5 0.5L3.5 2.5L0.5 4.5Z" fill="#7a7a7a"/></svg>
<div class="t" style="left:609px;top:370.0px;color:#e8e8e8">Group</div>
<svg class="a" style="left:684.5px;top:372.3px" width="4" height="5"><path d="M0.5 0.5L3.5 2.5L0.5 4.5Z" fill="#7a7a7a"/></svg>
<div class="t" style="left:609px;top:380.8px;color:#e8e8e8">Track</div>
<svg class="a" style="left:684.5px;top:383.1px" width="4" height="5"><path d="M0.5 0.5L3.5 2.5L0.5 4.5Z" fill="#7a7a7a"/></svg>
<div class="t" style="left:609px;top:391.8px;color:#e8e8e8">Parent</div>
<svg class="a" style="left:684.5px;top:394.1px" width="4" height="5"><path d="M0.5 0.5L3.5 2.5L0.5 4.5Z" fill="#7a7a7a"/></svg>
<div class="t" style="left:609px;top:405.4px;color:#e8e8e8">Make Single User</div>
<div class="t" style="right:343.0px;top:405.4px;color:#e8e8e8">U</div>
<svg class="a" style="left:684.5px;top:407.7px" width="4" height="5"><path d="M0.5 0.5L3.5 2.5L0.5 4.5Z" fill="#7a7a7a"/></svg>
<div class="t" style="left:609px;top:416.1px;color:#e8e8e8">Make Local...</div>
<svg class="a" style="left:684.5px;top:418.4px" width="4" height="5"><path d="M0.5 0.5L3.5 2.5L0.5 4.5Z" fill="#7a7a7a"/></svg>
<div class="t" style="left:609px;top:426.7px;color:#e8e8e8">Make Dupli-Face</div>
<div class="t" style="left:609px;top:437.6px;color:#e8e8e8">Make Links...</div>
<div class="t" style="right:343.0px;top:437.6px;color:#e8e8e8">Ctrl L</div>
<svg class="a" style="left:684.5px;top:439.9px" width="4" height="5"><path d="M0.5 0.5L3.5 2.5L0.5 4.5Z" fill="#7a7a7a"/></svg>
<div class="t" style="left:609px;top:448.2px;color:#e8e8e8">Make Proxy...</div>
<div class="t" style="right:336.5px;top:448.2px;color:#e8e8e8">Ctrl Alt P</div>
<div class="t" style="left:609px;top:458.9px;color:#e8e8e8">Delete...</div>
<div class="t" style="right:336.5px;top:458.9px;color:#e8e8e8">X</div>
<div class="t" style="left:609px;top:469.7px;color:#e8e8e8">Duplicate Linked</div>
<div class="t" style="right:336.5px;top:469.7px;color:#e8e8e8">Alt D</div>
<div class="t" style="left:609px;top:480.4px;color:#e8e8e8">Duplicate Objects</div>
<div class="t" style="right:336.5px;top:480.4px;color:#e8e8e8">Shift D</div>
<div class="t" style="left:609px;top:494.2px;color:#e8e8e8">Animation</div>
<svg class="a" style="left:684.5px;top:496.5px" width="4" height="5"><path d="M0.5 0.5L3.5 2.5L0.5 4.5Z" fill="#7a7a7a"/></svg>
<div class="t" style="left:609px;top:508.6px;color:#e8e8e8">Snap</div>
<div class="t" style="right:343.0px;top:508.6px;color:#e8e8e8">Shift S</div>
<svg class="a" style="left:684.5px;top:510.9px" width="4" height="5"><path d="M0.5 0.5L3.5 2.5L0.5 4.5Z" fill="#7a7a7a"/></svg>
<div class="t" style="left:609px;top:519.0px;color:#101010">Apply</div>
<div class="t" style="right:343.0px;top:519.0px;color:#101010">Ctrl A</div>
<svg class="a" style="left:684.5px;top:521.3px" width="4" height="5"><path d="M0.5 0.5L3.5 2.5L0.5 4.5Z" fill="#3a4a70"/></svg>
<div class="t" style="left:609px;top:529.7px;color:#e8e8e8">Clear</div>
<svg class="a" style="left:684.5px;top:532.0px" width="4" height="5"><path d="M0.5 0.5L3.5 2.5L0.5 4.5Z" fill="#7a7a7a"/></svg>
<div class="t" style="left:609px;top:540.5px;color:#e8e8e8">Mirror</div>
<svg class="a" style="left:684.5px;top:542.8px" width="4" height="5"><path d="M0.5 0.5L3.5 2.5L0.5 4.5Z" fill="#7a7a7a"/></svg>
<div class="t" style="left:609px;top:551.0px;color:#e8e8e8">Transform</div>
<svg class="a" style="left:684.5px;top:553.3px" width="4" height="5"><path d="M0.5 0.5L3.5 2.5L0.5 4.5Z" fill="#7a7a7a"/></svg>
<div class="t" style="left:609px;top:564.9px;color:#e8e8e8">Undo History</div>
<div class="t" style="right:336.5px;top:564.9px;color:#e8e8e8">Ctrl Alt Z</div>
<div class="t" style="left:609px;top:575.6px;color:#e8e8e8">Redo</div>
<div class="t" style="right:336.5px;top:575.6px;color:#e8e8e8">Shift Ctrl Z</div>
<div class="t" style="left:609px;top:586.4px;color:#e8e8e8">Undo</div>
<div class="t" style="right:336.5px;top:586.4px;color:#e8e8e8">Ctrl Z</div>
<div class="a" style="left:690.5px;top:518px;width:112px;height:67px;border-radius:0 3px 3px 0;background:rgba(24,24,24,0.93)"></div>
<div class="a" style="left:690.5px;top:540px;width:111.5px;height:9.5px;background:linear-gradient(#7aa2e0,#5a84c8)"></div>
<div class="t" style="left:701.5px;top:518.0px;color:#e8e8e8">Location</div>
<div class="t" style="left:701.5px;top:529.1px;color:#e8e8e8">Rotation</div>
<div class="t" style="left:701.5px;top:539.7px;color:#101830">Scale</div>
<div class="t" style="left:701.5px;top:550.5px;color:#e8e8e8">Rotation &amp; Scale</div>
<div class="t" style="left:701.5px;top:564.2px;color:#e8e8e8">Visual Transform</div>
<div class="t" style="left:701.5px;top:575.0px;color:#e8e8e8">Make Duplicates Real</div>
<div class="t" style="right:224.0px;top:575.0px;color:#e8e8e8">Shift Ctrl A</div>
</body></html>
